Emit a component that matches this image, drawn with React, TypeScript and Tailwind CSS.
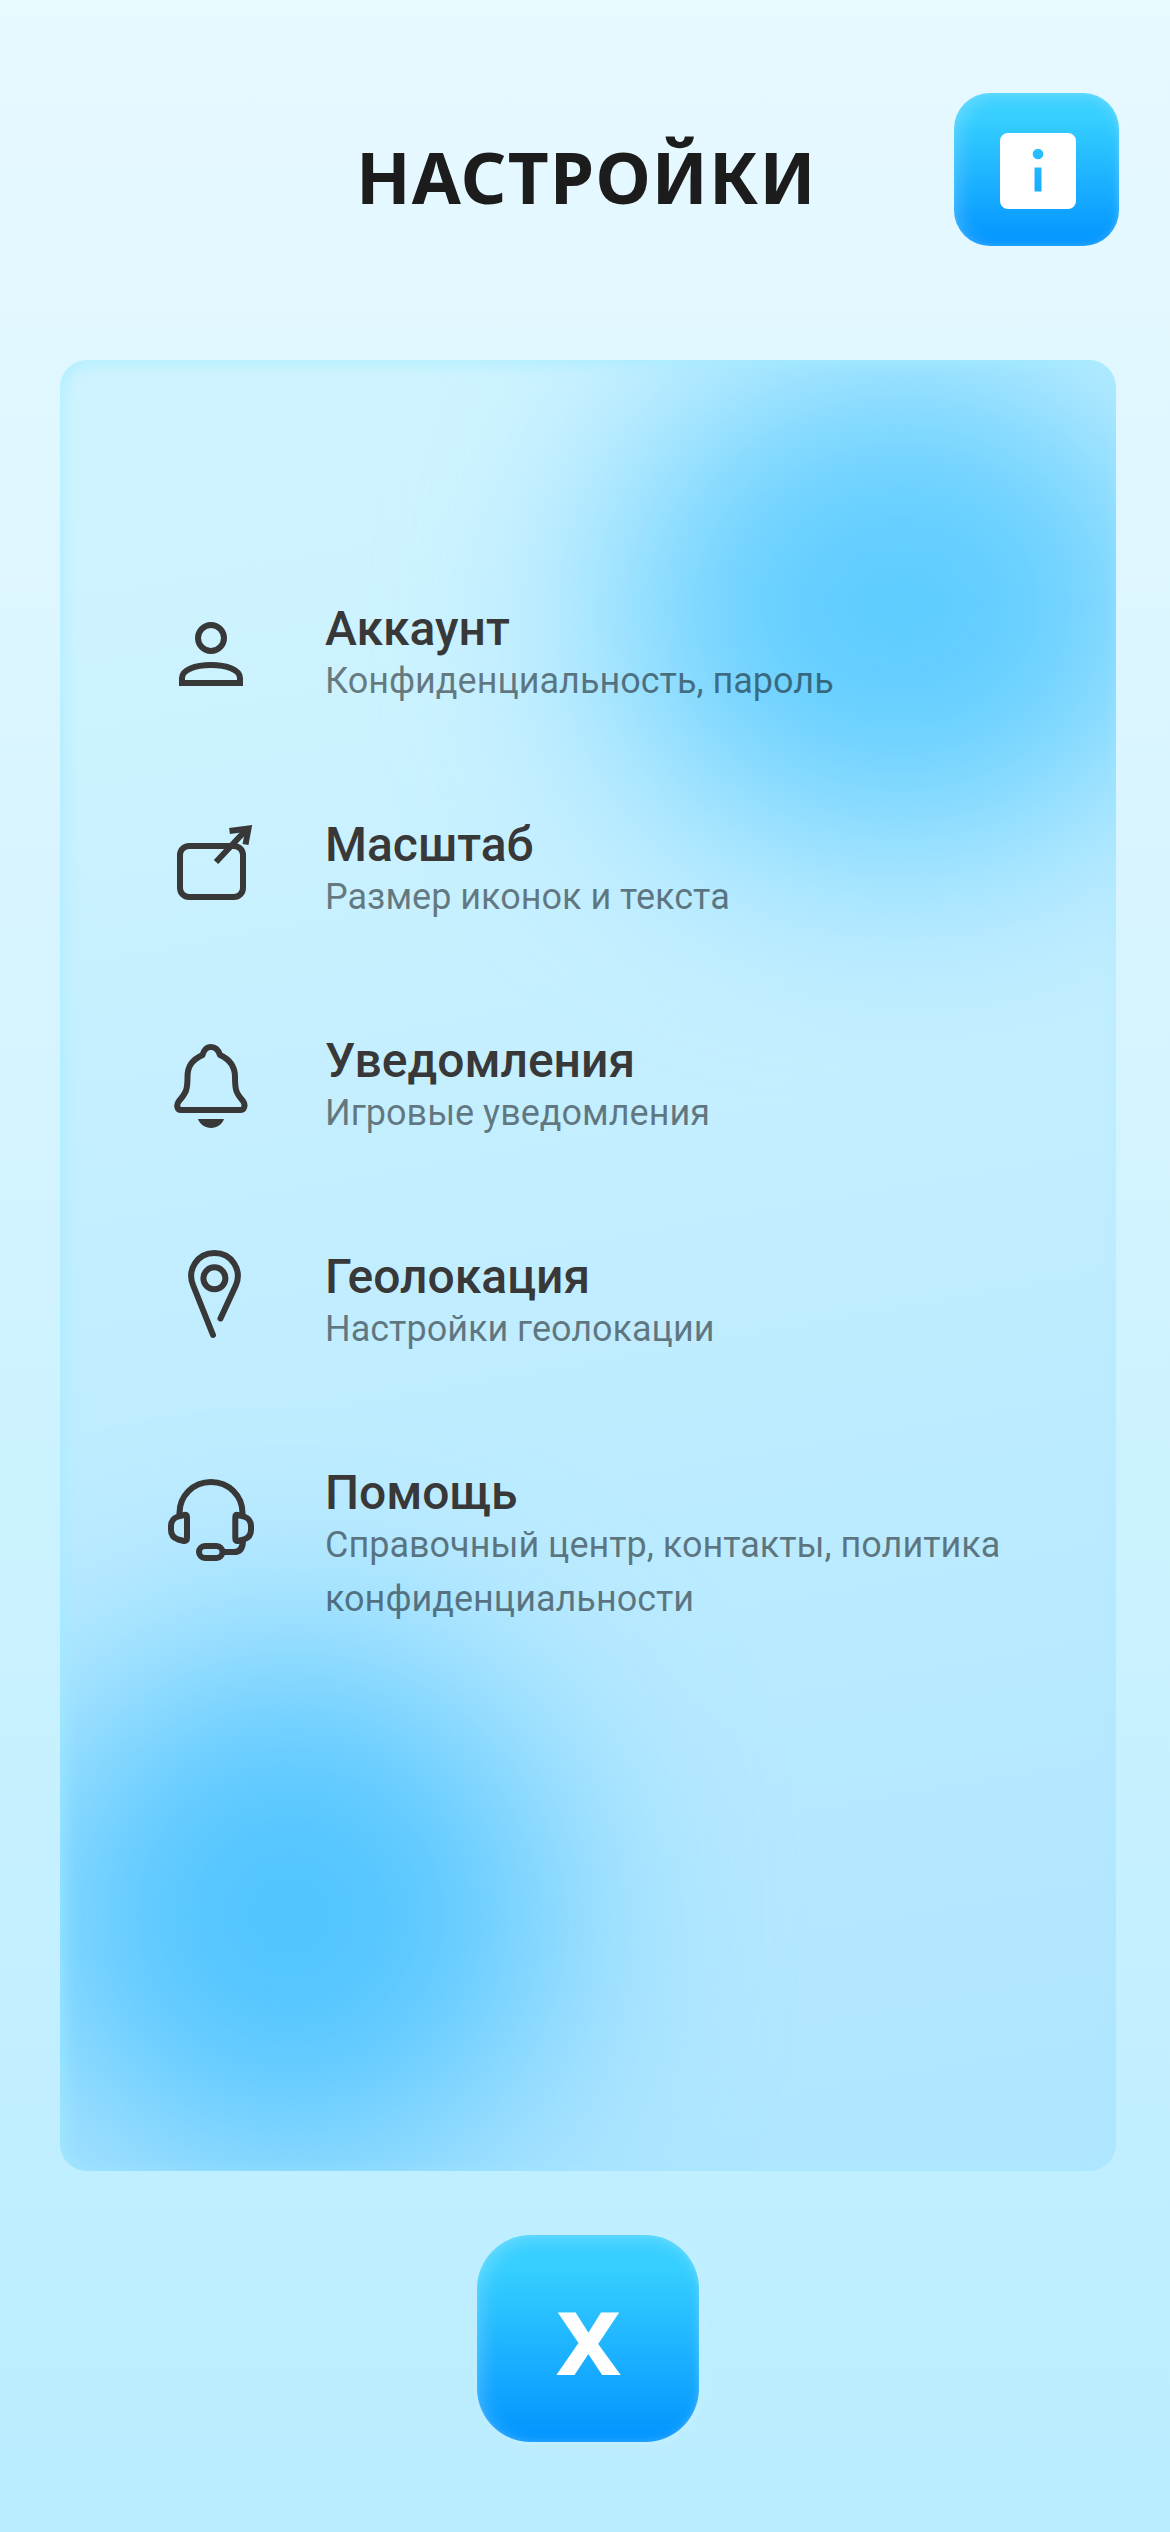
import React from "react";

const stroke = {
  fill: "none",
  stroke: "#383838",
  strokeWidth: 6,
} as const;

/* Every icon is drawn on a 96x106 box whose centre line is the icon axis of the list. */
const icons: Record<string, React.ReactNode> = {
  user: (
    <g {...stroke}>
      <circle cx="48" cy="36" r="13" />
      <path d="M19 81V76C19 68 32 63 48 63S77 68 77 76V81Z" />
    </g>
  ),
  scale: (
    <g {...stroke}>
      <rect x="17" y="28" width="63" height="51" rx="9" />
      <path d="M53 44L83 12" />
      <path d="M66.500 13L85.500 10.500L82.500 26.500" strokeMiterlimit="10" />
    </g>
  ),
  bell: (
    <g {...stroke} strokeLinejoin="round">
      <path d="M39.500 21C40.500 16.500 43.500 13 48 13S55.500 16.500 57 21C67 25.500 72 32 72 43C72 56 73 59 80 67C83 71 81 76 78 76H18C14 76 13 71 16 67C23 59 24.500 56 24.500 43C24.500 32 29 26 39.500 21Z" />
      <path d="M35 85H61C59 90.500 54 94 48 94S37 90.500 35 85Z" fill="#383838" stroke="none" />
    </g>
  ),
  pin: (
    <g {...stroke} strokeLinecap="round" strokeLinejoin="round">
      <circle cx="51.400" cy="28.300" r="11" />
      <path d="M50 85L30 35C24 20 34 3 51.500 3S79 20 73 35L57.500 68.500" />
    </g>
  ),
  headset: (
    <g {...stroke} strokeLinejoin="round">
      <path d="M16.500 50V47C16.500 30 30 16 48 16S79.500 30 79.500 47V50" />
      <path d="M15 50.500L21 49Q24 48 24 51V72Q24 75.500 21 75L15 73.500Q8 71 8 64V60Q8 53 15 50.500Z" />
      <path d="M81 50.500L75 49Q72.300 48 72.300 51V72Q72.300 75.500 75 75L81 73.500Q88 71 88 64V60Q88 53 81 50.500Z" />
      <rect x="36" y="80" width="23.500" height="12" rx="6" />
      <path d="M60 86H71Q79.500 86 80 75" />
    </g>
  ),
};

const items = [
  { icon: "user", title: "Аккаунт", text: "Конфиденциальность, пароль" },
  { icon: "scale", title: "Масштаб", text: "Размер иконок и текста" },
  { icon: "bell", title: "Уведомления", text: "Игровые уведомления" },
  { icon: "pin", title: "Геолокация", text: "Настройки геолокации" },
  { icon: "headset", title: "Помощь", text: "Справочный центр, контакты, политика конфиденциальности" },
];

const glossy =
  "flex items-center justify-center bg-[linear-gradient(180deg,#36cfff_16%,#0496ff_96%)] shadow-[inset_5px_5px_18px_rgba(255,255,255,0.22),inset_-1px_0px_6px_rgba(255,255,255,0.12),3px_3px_12px_rgba(255,255,255,0.12)]";

export default function App() {
  return (
    <div className="flex h-[2532px] w-[1170px] flex-col overflow-hidden bg-[linear-gradient(180deg,#e8f9ff_0%,#b9edff_100%)]">
      <header className="grid h-[360px] grid-cols-[1fr_446px_1fr] items-start pt-[93px]">
        <h1 className="col-start-2 mt-[34px] -ml-[6px] whitespace-nowrap text-center font-['Noto_Sans',sans-serif] text-[71px] leading-[100px] font-bold tracking-[1.2px] text-[#1c1c1c]">
          НАСТРОЙКИ
        </h1>
        <button className={`${glossy} mr-[51px] h-[153px] w-[165px] justify-self-end rounded-[36px]`} aria-label="Информация">
          <svg width="76" height="76" viewBox="0 0 76 76" className="mt-[3px] ml-[3px]">
            <path
              fill="#fff"
              fillRule="evenodd"
              d="M8 0H68A8 8 0 0 1 76 8V68A8 8 0 0 1 68 76H8A8 8 0 0 1 0 68V8A8 8 0 0 1 8 0ZM38 15.700A5.300 5.300 0 1 0 38 26.300A5.300 5.300 0 1 0 38 15.700ZM34.500 34.500V58.500H41.500V34.500Z"
            />
          </svg>
        </button>
      </header>

      <main className="relative ml-[60px] h-[1811px] w-[1056px] shrink-0 overflow-hidden rounded-[27px] bg-[linear-gradient(170deg,#d0f4ff_8%,#b0e6ff_95%)]">
        <div className="absolute top-[5px] left-[560px] h-[480px] w-[560px] rounded-full bg-[#5ccbff] blur-[110px]" />
        <div className="absolute top-[1300px] left-[-30px] h-[510px] w-[520px] rounded-full bg-[#4ec3ff] blur-[110px]" />
        <div className="absolute inset-0 rounded-[27px] shadow-[inset_4px_4px_16px_rgba(160,236,255,0.65)]" />
        <ul className="relative flex flex-col pt-[242px] pl-[103px]">
          {items.map((item) => (
            <li key={item.icon} className="flex h-[216px] items-start">
              <svg width="96" height="106" viewBox="0 0 96 106" className="shrink-0 overflow-visible">
                {icons[item.icon]}
              </svg>
              <div className="mt-px ml-[66px] w-[720px] font-['Roboto',sans-serif]">
                <h2 className="text-[48px] leading-[51px] font-medium text-[#383838]">{item.title}</h2>
                <p className="text-[36px] leading-[54px] text-black/50">{item.text}</p>
              </div>
            </li>
          ))}
        </ul>
      </main>

      <button className={`${glossy} mt-[64px] ml-[477px] h-[207px] w-[222px] shrink-0 rounded-[54px]`} aria-label="Закрыть">
        <span className="mt-[4px] ml-[2px] scale-x-[1.06] font-['Noto_Sans',sans-serif] text-[88px] leading-none font-extrabold text-white">X</span>
      </button>
    </div>
  );
}
